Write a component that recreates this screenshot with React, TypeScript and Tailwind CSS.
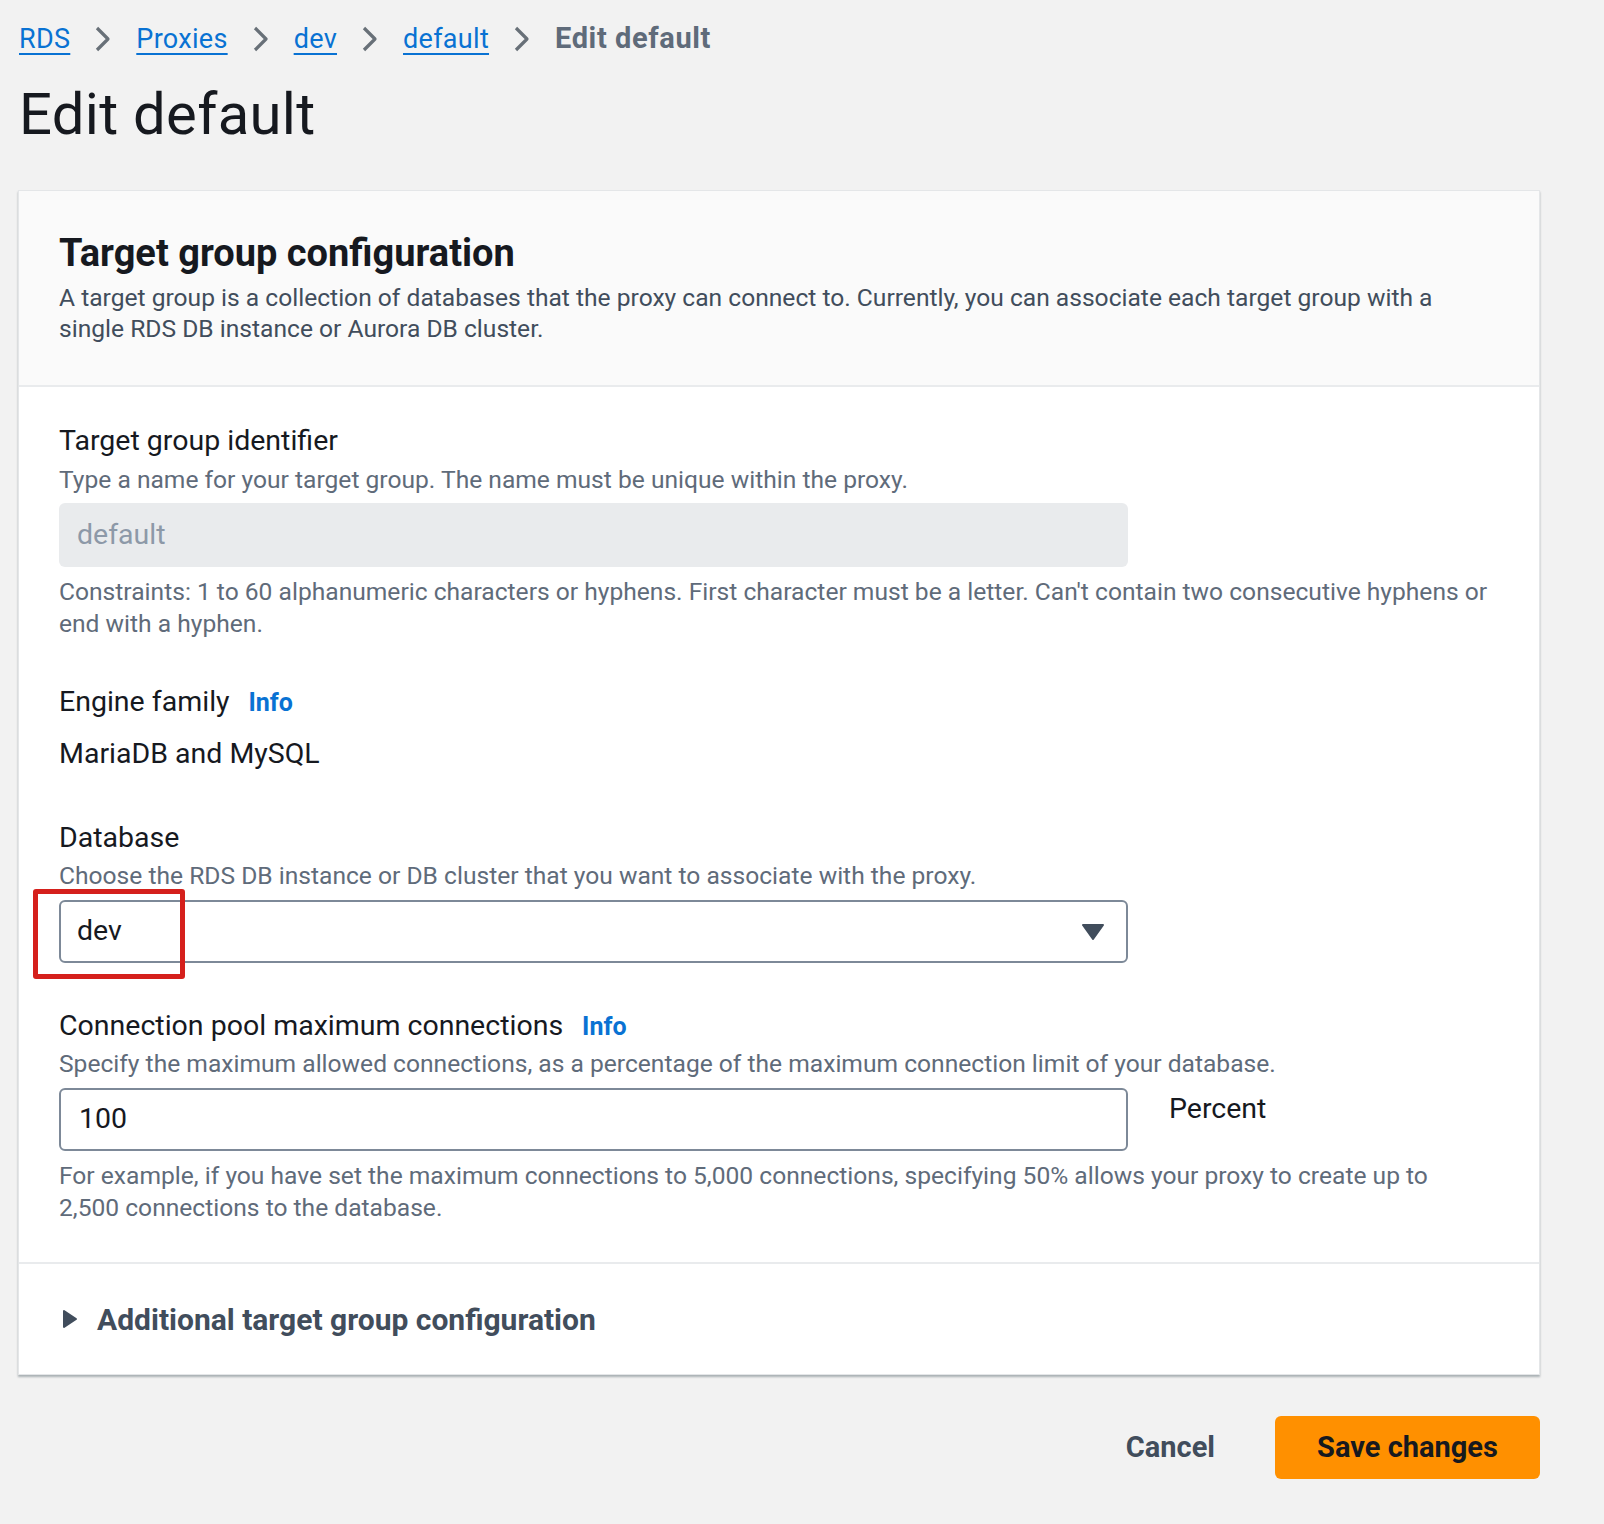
import React from 'react';

const font = { fontFamily: 'Roboto, "Noto Sans", sans-serif' };

function Chevron() {
  return (
    <svg className="w-[22px] h-[30px] text-[#687078]" viewBox="0 0 22 30" fill="none">
      <path d="M5 4l11 11L5 26" stroke="currentColor" strokeWidth="3.2" strokeLinejoin="round" />
    </svg>
  );
}

function Info() {
  return <span className="ml-[19px] text-[25px] font-bold text-[#0972d3]">Info</span>;
}

export default function App() {
  const crumbs = ['RDS', 'Proxies', 'dev', 'default'];
  return (
    <div className="min-h-[1524px] w-[1604px] bg-[#f2f2f2] text-[#16191f]" style={font}>
      <div className="pl-[19px] pr-[64px] pt-[18px]">
        {/* breadcrumbs */}
        <nav className="flex items-center h-[42px] text-[27px]">
          {crumbs.map(c => (
            <React.Fragment key={c}>
              <a className="text-[#0972d3] underline underline-offset-[5px] decoration-[2px] tracking-[0.3px]">{c}</a>
              <span className="mx-[22px] flex items-center"><Chevron /></span>
            </React.Fragment>
          ))}
          <span className="font-bold text-[#5f6b7a] text-[29px] tracking-[0.6px]">Edit default</span>
        </nav>

        <h1 className="mt-[22px] text-[58px] leading-[64px] font-normal tracking-[0.3px]">Edit default</h1>

        {/* card */}
        <div className="mt-[44px] ml-[-1px] w-[1522px] bg-white border border-[#e4e6e8] shadow-[0_2px_2px_rgba(0,28,36,0.3)]">
          <div className="bg-[#fafafa] border-b-2 border-[#e9ebed] px-10 pt-[40px] pb-[41px]">
            <h2 className="text-[38px] leading-[44px] font-bold">Target group configuration</h2>
            <p className="mt-[7px] text-[24.6px] leading-[31px] text-[#414d5c]">
              A target group is a collection of databases that the proxy can connect to. Currently, you can associate each target group with a single RDS DB instance or Aurora DB cluster.
            </p>
          </div>

          <div className="px-10 pt-[37px] pb-[38px] text-[24.6px]">
            <div className="text-[28.5px] leading-[34px]">Target group identifier</div>
            <div className="mt-[6px] leading-[32px] text-[#5f6b7a]">Type a name for your target group. The name must be unique within the proxy.</div>
            <div className="mt-[7px] w-[1069px] h-[64px] rounded-[6px] bg-[#e9ebed] flex items-center px-[18px] text-[28.5px] text-[#8d99a8]">default</div>
            <div className="mt-[9px] leading-[32px] text-[#5f6b7a] pr-[4px]">
              Constraints: 1 to 60 alphanumeric characters or hyphens. First character must be a letter. Can't contain two consecutive hyphens or end with a hyphen.
            </div>

            <div className="mt-[45px] flex items-baseline text-[28.5px] leading-[34px]">Engine family<Info /></div>
            <div className="mt-[17px] text-[28.5px] leading-[34px]">MariaDB and MySQL</div>

            <div className="mt-[50px] text-[28.5px] leading-[34px]">Database</div>
            <div className="mt-[5px] leading-[32px] text-[#5f6b7a]">Choose the RDS DB instance or DB cluster that you want to associate with the proxy.</div>
            <div className="relative mt-[8px] w-[1069px]">
              <div className="h-[63px] rounded-[6px] border-2 border-[#7d8998] flex items-center justify-between pl-[16px] pr-[22px] text-[28.5px]">
                <span>dev</span>
                <svg className="w-[22px] h-[16px]" viewBox="0 0 22 16">
                  <path d="M1 1h20L11 15z" fill="#414d5c" stroke="#414d5c" strokeWidth="2" strokeLinejoin="round" />
                </svg>
              </div>
              <div className="absolute left-[-26px] top-[-11px] w-[152px] h-[90px] border-[5px] border-[#d5201c] rounded-[3px]" />
            </div>

            <div className="mt-[46px] flex items-baseline text-[28.5px] leading-[34px]">Connection pool maximum connections<Info /></div>
            <div className="mt-[4px] leading-[32px] text-[#5f6b7a]">Specify the maximum allowed connections, as a percentage of the maximum connection limit of your database.</div>
            <div className="mt-[8px] flex items-start">
              <div className="w-[1069px] h-[63px] rounded-[6px] border-2 border-[#7d8998] flex items-center px-[18px] text-[28.5px]">100</div>
              <div className="ml-[41px] mt-[4px] text-[28.5px] leading-[34px]">Percent</div>
            </div>
            <div className="mt-[9px] leading-[32px] text-[#5f6b7a] pr-[40px]">
              For example, if you have set the maximum connections to 5,000 connections, specifying 50% allows your proxy to create up to 2,500 connections to the database.
            </div>
          </div>

          <div className="border-t-2 border-[#e9ebed] px-10 h-[112px] flex items-center">
            <svg className="w-[16px] h-[20px] ml-[3px]" viewBox="0 0 16 20">
              <path d="M2 2l12 8-12 8z" fill="#414d5c" stroke="#414d5c" strokeWidth="2" strokeLinejoin="round" />
            </svg>
            <span className="ml-[19px] text-[30px] font-bold text-[#414d5c]">Additional target group configuration</span>
          </div>
        </div>

        {/* actions */}
        <div className="mt-[41px] w-[1521px] flex justify-end items-center">
          <button className="text-[29px] font-bold text-[#414d5c] px-[20px] mr-[40px]">Cancel</button>
          <button className="w-[265px] h-[63px] rounded-[6px] bg-[#ff9000] text-[29px] font-bold text-[#16191f]">Save changes</button>
        </div>
      </div>
    </div>
  );
}
